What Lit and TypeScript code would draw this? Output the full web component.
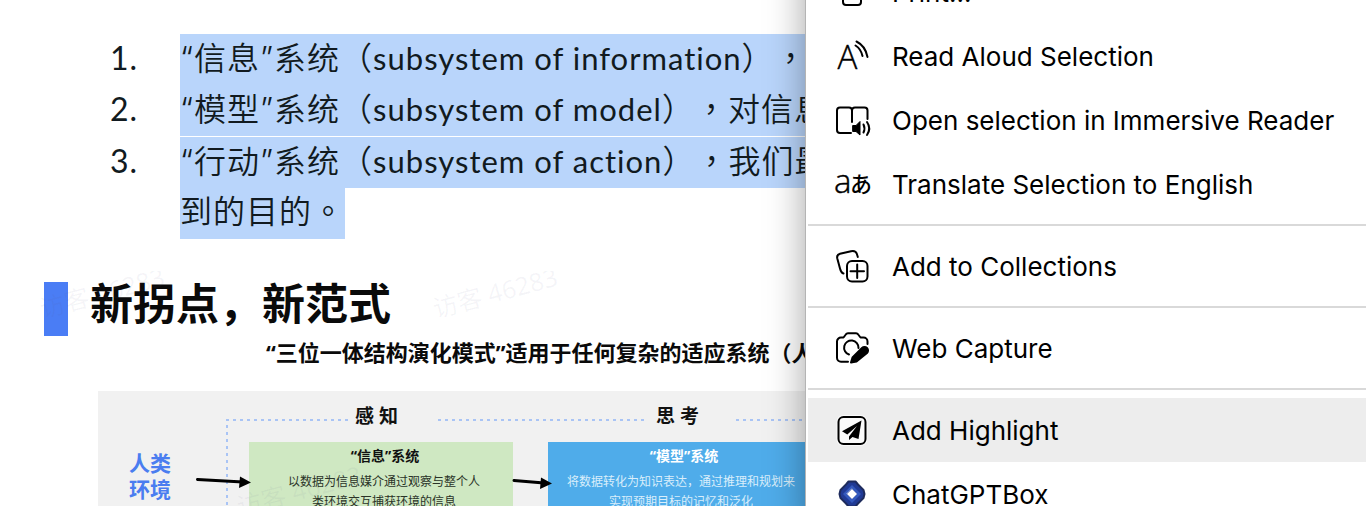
import { LitElement, html, css, svg } from "lit";
import { customElement, property } from "lit/decorators.js";

const icons: Record<string, unknown> = {
  print: svg`<path d="M4 22H1.500V11a4 4 0 0 1 4-4h21a4 4 0 0 1 4 4v11H28M7 7V1h18v6"/><rect x="7" y="16" width="18" height="13" rx="3"/>`,
  aloud: svg`<text class="glyph light" x="1.500" y="28.500" font-size="33">A</text><path d="M19.500 5.500Q25 9 26.500 16M20.500 1.500Q29.500 6 31.500 17"/>`,
  reader: svg`<path d="M16 18V6.500a3 3 0 0 0-3-3H4a3 3 0 0 0-3 3V26a3 3 0 0 0 3 3h11M16 6.500a3 3 0 0 1 3-3h9.500a3 3 0 0 1 3 3V15"/><path class="solid thin" d="M17 21.500h3l4-4v13.500l-4-3.500h-3z"/><path d="M27.500 20.500q2 4 0 8M31 18q4.500 6.500 0 13"/>`,
  translate: svg`<text class="glyph light" x="-2" y="24.500" font-size="33">a</text><text class="glyph kana" x="14" y="24" font-size="22">あ</text>`,
  collections: svg`<rect x="11" y="11" width="20.500" height="20.500" rx="5"/><path d="M21.200 14.500v13.500M14.500 21.200h13.500M7.500 23.500C5 23 4.500 20.500 4 18.500L1.300 8.500C.600 5.500 1.500 4.500 4 3.800L15 1.200c3.500-.700 5 0 5.800 2.600l1 3.200"/>`,
  capture: svg`<path d="M12 29.700H5a4 4 0 0 1-4-4V9.500a4 4 0 0 1 4-4h2.500L9.800 2.500Q10.500 1.300 12 1.300h8q1.500 0 2.200 1.200l2.300 3h3a4 4 0 0 1 4 4V12M13 22.500a7.200 7.200 0 1 1 9.500-6.500"/><path class="solid" d="M15 30.500l1.500-5L26 16a3.500 3.500 0 0 1 5 5L20.500 29.500z"/>`,
  highlight: svg`<rect x="2.500" y="3" width="27" height="27" rx="5" fill="#fafafa" stroke="#fafafa" stroke-width="4"/><rect x="2.500" y="3" width="27" height="27" rx="5"/><path class="fill" d="M25.500 6.500L6 17.300l5.300 3.200L21 12l-8 10.500v3.500l3.500-3 6 2z"/>`,
  box: svg`<path d="M12.500 3.500h7l2.500 3L27.500 12l1 4-1 4L22 25.500l-2.500 3h-7l-2.500-3L4.500 20l-1-4 1-4L10 6.500z" fill="#203a95" stroke="#1e2b5c"/><path d="M16 7l9 9-9 9-9-9z" fill="#3459bd" stroke="none"/><path d="M16 11l5 5-5 5-5-5z" fill="#fff" stroke="#9aa7cf" stroke-width="1"/>`,
};

@customElement("menu-entry")
class MenuEntry extends LitElement {
  @property() icon = "";
  @property() label = "";
  @property({ type: Boolean, reflect: true }) active = false;

  static styles = css`
    :host { display: block; }
    button {
      display: flex; align-items: center; gap: 24px;
      width: 100%; height: 64px; padding: 0 28px;
      border: 0; background: none; color: #000;
      font: 400 26px/32px Inter, "Liberation Sans", sans-serif;
      text-align: left; white-space: nowrap;
    }
    button span { padding-top: 2px; }
    :host([active]) button { background: #ededed; }
    svg {
      flex: none; width: 32px; height: 32px; overflow: visible;
      fill: none; stroke: #000; stroke-width: 2;
      stroke-linecap: round; stroke-linejoin: round;
    }
    .glyph { fill: #000; stroke: none; font-family: "Open Sans", sans-serif; }
    .light { font-weight: 300; stroke: #000; stroke-width: 0.4; }
    .kana { font-family: "Noto Sans CJK JP", sans-serif; font-weight: 500; }
    .solid { fill: #000; }
    .thin { stroke-width: 1; }
    .fill { fill: #000; stroke: none; }
  `;

  render() {
    return html`<button role="menuitem">
      <svg viewBox="0 0 32 32" aria-hidden="true">${icons[this.icon]}</svg>
      <span>${this.label}</span>
    </button>`;
  }
}

@customElement("system-diagram")
class SystemDiagram extends LitElement {
  static styles = css`
    :host {
      display: block; position: relative; height: 240px; margin-left: 98px;
      background: #f1f1f1; color: #111; overflow: hidden;
      font-family: "Noto Sans", "Noto Sans CJK SC", sans-serif; font-weight: 400;
    }
    svg { position: absolute; left: 0; top: 0; width: 100%; height: 100%; }
    .dots { stroke: #a9c4f5; stroke-width: 2; stroke-dasharray: 3 4; fill: none; }
    .arrow { stroke: #000; stroke-width: 3; stroke-linecap: round; }
    .stage { position: absolute; top: 11px; font-size: 19px; line-height: 28px; font-weight: 700; white-space: nowrap; }
    .sense { left: 257px; }
    .think { left: 558px; }
    .world { position: absolute; left: 31px; top: 59px; color: #4a7df0; font-size: 21px; line-height: 26px; font-weight: 700; }
    .node { position: absolute; top: 51px; width: 264px; height: 180px; padding-top: 4px; box-sizing: border-box; text-align: center; font-size: 12px; line-height: 20px; white-space: nowrap; }
    .node h3 { margin: 0 0 6px; padding-left: 8px; font-size: 14px; line-height: 20px; }
    .node p { margin: 0; }
    .info { left: 151px; background: #cfe8c2; }
    .info p { padding-left: 6px; color: #2a3327; }
    .model { left: 450px; background: #4facea; color: #fff; }
    .model p { padding-left: 2px; color: #d9eefb; }
  `;

  render() {
    return html`
      <div class="world">人类<br />环境</div>
      <div class="stage sense">感 知</div>
      <div class="stage think">思 考</div>
      <section class="node info">
        <h3>“信息”系统</h3>
        <p>以数据为信息媒介通过观察与整个人<br />类环境交互捕获环境的信息</p>
      </section>
      <section class="node model">
        <h3>“模型”系统</h3>
        <p>将数据转化为知识表达，通过推理和规划来<br />实现预期目标的记忆和泛化</p>
      </section>
      <svg aria-hidden="true">
        <path class="dots" d="M129 240V29H250M340 29H550M638 29H850" />
        <path class="arrow" d="M99.500 88.500L145 91M416 89.500L446 92" />
        <path d="M142 85.500l11 6-12 5.500zM443 86.500l11 6-12 5.500z" />
      </svg>
    `;
  }
}

@customElement("app-root")
class AppRoot extends LitElement {
  static styles = css`
    :host { display: block; position: relative; height: 100vh; overflow: hidden; background: #fff; }
    article { padding-top: 34px; }
    ol { list-style: none; margin: 0; padding: 0 0 0 110px; color: #111a20; font: 400 32px/48px Lato, "Noto Sans CJK TC", sans-serif; letter-spacing: 1px; text-spacing-trim: space-all; }
    li { display: grid; grid-template-columns: 70px 1fr; white-space: nowrap; }
    li:last-child { margin-top: 1px; }
    mark { display: block; height: 51px; background: #b9d5fb; color: inherit; font-family: Inter, "Noto Sans CJK TC", sans-serif; font-weight: 350; overflow: hidden; }
    .latin { font-family: Lato, sans-serif; font-size: 31px; font-weight: 400; }
    .tail { width: fit-content; }
    figure { position: relative; margin: 32px 0 0; overflow: hidden; font-family: "Noto Sans", "Noto Sans CJK SC", sans-serif; font-weight: 700; color: #0a0a0a; white-space: nowrap; }
    .title { display: flex; gap: 22px; padding: 11px 0 0 44px; }
    .bar { width: 24px; height: 54px; background: #4a7df5; }
    h2 { margin: 0; font-size: 43px; line-height: 43px; }
    .sub { margin: 0 0 22px; padding-left: 266px; font-size: 22px; line-height: 33px; }
    .stamp { position: absolute; color: rgba(90, 90, 130, 0.06); font-size: 25px; line-height: 30px; font-weight: 400; transform: rotate(-15deg); }
    .s1 { left: 38px; top: 6px; }
    .s2 { left: 431px; top: 6px; }
    .s3 { left: 235px; top: 204px; }
    nav { position: absolute; right: 0; top: -48px; width: 561px; box-sizing: border-box; padding: 8px 0 8px 2px; border-left: 1px solid #b4b4b4; background: #fff; box-shadow: 0 0 36px rgba(0, 0, 0, 0.36); }
    hr { height: 2px; margin: 8px 0; border: 0; background: #d9d9d9; }
  `;

  private entries = [
    ["print", "Print..."],
    ["aloud", "Read Aloud Selection"],
    ["reader", "Open selection in Immersive Reader"],
    ["translate", "Translate Selection to English"],
    [],
    ["collections", "Add to Collections"],
    [],
    ["capture", "Web Capture"],
    [],
    ["highlight", "Add Highlight"],
    ["box", "ChatGPTBox"],
  ];

  render() {
    return html`
      <article>
        <ol>
          <li><span>1.</span><mark>“信息”系统（<span class="latin">subsystem of information</span>），</mark></li>
          <li><span>2.</span><mark>“模型”系统（<span class="latin">subsystem of model</span>），对信息</mark></li>
          <li>
            <span>3.</span>
            <div><mark>“行动”系统（<span class="latin">subsystem of action</span>），我们最</mark><mark class="tail">到的目的。</mark></div>
          </li>
        </ol>
        <figure>
          <div class="title"><div class="bar"></div><h2>新拐点，新范式</h2></div>
          <p class="sub">“三位一体结构演化模式”适用于任何复杂的适应系统（人</p>
          <system-diagram></system-diagram>
          <span class="stamp s1">访客 46283</span>
          <span class="stamp s2">访客 46283</span>
          <span class="stamp s3">访客 46283</span>
        </figure>
      </article>
      <nav role="menu" aria-label="Context menu">
        ${this.entries.map(([icon, label]) =>
          icon
            ? html`<menu-entry .icon=${icon} .label=${label} ?active=${icon === "highlight"}></menu-entry>`
            : html`<hr />`
        )}
      </nav>
    `;
  }
}
